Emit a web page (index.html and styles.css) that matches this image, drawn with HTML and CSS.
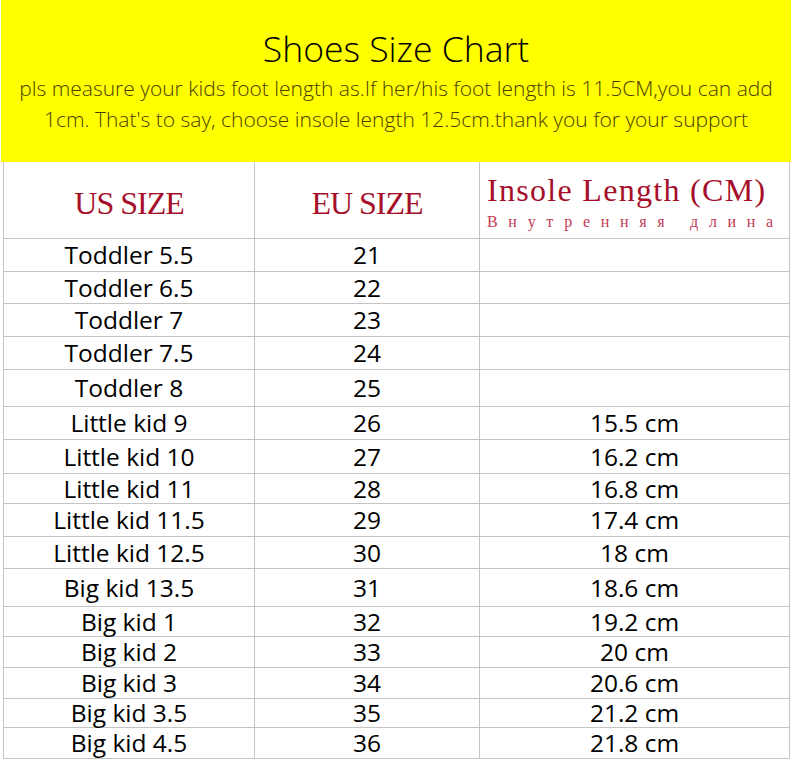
FILE: index.html
```html
<!DOCTYPE html>
<html lang="en">
<head>
<meta charset="utf-8">
<title>Shoes Size Chart</title>
<link rel="stylesheet" href="styles.css">
</head>
<body>
<div class="banner">
  <h1 class="title">Shoes Size Chart</h1>
  <p class="note">pls measure your kids foot length as.If her/his foot length is 11.5CM,you can add<br>1cm. That's to say, choose insole length 12.5cm.thank you for your support</p>
</div>
<div class="chart">
  <div class="cell head">US SIZE</div>
  <div class="cell head">EU SIZE</div>
  <div class="cell head insole">
    <div class="insole-en">Insole Length (CM)</div>
    <div class="insole-ru">Внутренняя длина</div>
  </div>

  <div class="cell">Toddler 5.5</div><div class="cell">21</div><div class="cell"></div>
  <div class="cell">Toddler 6.5</div><div class="cell">22</div><div class="cell"></div>
  <div class="cell">Toddler 7</div><div class="cell">23</div><div class="cell"></div>
  <div class="cell">Toddler 7.5</div><div class="cell">24</div><div class="cell"></div>
  <div class="cell">Toddler 8</div><div class="cell">25</div><div class="cell"></div>
  <div class="cell">Little kid 9</div><div class="cell">26</div><div class="cell">15.5 cm</div>
  <div class="cell">Little kid 10</div><div class="cell">27</div><div class="cell">16.2 cm</div>
  <div class="cell">Little kid 11</div><div class="cell">28</div><div class="cell">16.8 cm</div>
  <div class="cell">Little kid 11.5</div><div class="cell">29</div><div class="cell">17.4 cm</div>
  <div class="cell">Little kid 12.5</div><div class="cell">30</div><div class="cell">18 cm</div>
  <div class="cell">Big kid 13.5</div><div class="cell">31</div><div class="cell">18.6 cm</div>
  <div class="cell">Big kid 1</div><div class="cell">32</div><div class="cell">19.2 cm</div>
  <div class="cell">Big kid 2</div><div class="cell">33</div><div class="cell">20 cm</div>
  <div class="cell">Big kid 3</div><div class="cell">34</div><div class="cell">20.6 cm</div>
  <div class="cell">Big kid 3.5</div><div class="cell">35</div><div class="cell">21.2 cm</div>
  <div class="cell">Big kid 4.5</div><div class="cell">36</div><div class="cell">21.8 cm</div>
</div>
</body>
</html>
```

FILE: styles.css
```css
html, body {
  margin: 0;
  padding: 0;
  background: #ffffff;
}

body {
  width: 794px;
  height: 761px;
  overflow: hidden;
  font-family: "Open Sans", "Noto Sans", "Liberation Sans", sans-serif;
}

.banner {
  margin-left: 1px;
  width: 790px;
  height: 162px;
  background: #ffff00;
  box-sizing: border-box;
  padding-top: 28px;
  text-align: center;
}

.title {
  margin: 0;
  font-size: 35.5px;
  line-height: 40px;
  font-weight: 300;
  color: #000000;
}

.note {
  margin: 5px 0 0;
  font-size: 21px;
  line-height: 31px;
  font-weight: 300;
  color: #4a3d00;
}

.chart {
  margin-left: 3px;
  width: 787px;
  display: grid;
  grid-template-columns: 251px 225px 310px;
  grid-template-rows: 77px 33px 32px 33px 33px 37px 33px 34px 30px 33px 32px 38px 30px 31px 31px 29px 31px;
  border-left: 1px solid #c4c4c4;
}

.cell {
  box-sizing: border-box;
  border-right: 1px solid #c4c4c4;
  border-bottom: 1px solid #c4c4c4;
  display: flex;
  align-items: center;
  justify-content: center;
  font-size: 24.5px;
  line-height: 24px;
  color: #000000;
  white-space: nowrap;
}

.head {
  font-family: "Liberation Serif", "DejaVu Serif", serif;
  font-size: 32px;
  line-height: 32px;
  letter-spacing: -1px;
  color: #a50f2a;
  padding-top: 6px;
}

.insole {
  display: block;
  padding: 12px 0 0 7px;
  text-align: left;
}

.insole-en {
  font-size: 32px;
  line-height: 32px;
  letter-spacing: 1.3px;
}

.insole-ru {
  margin-top: 4px;
  font-size: 16px;
  line-height: 24px;
  letter-spacing: 10.7px;
  color: #c23a55;
}
```
